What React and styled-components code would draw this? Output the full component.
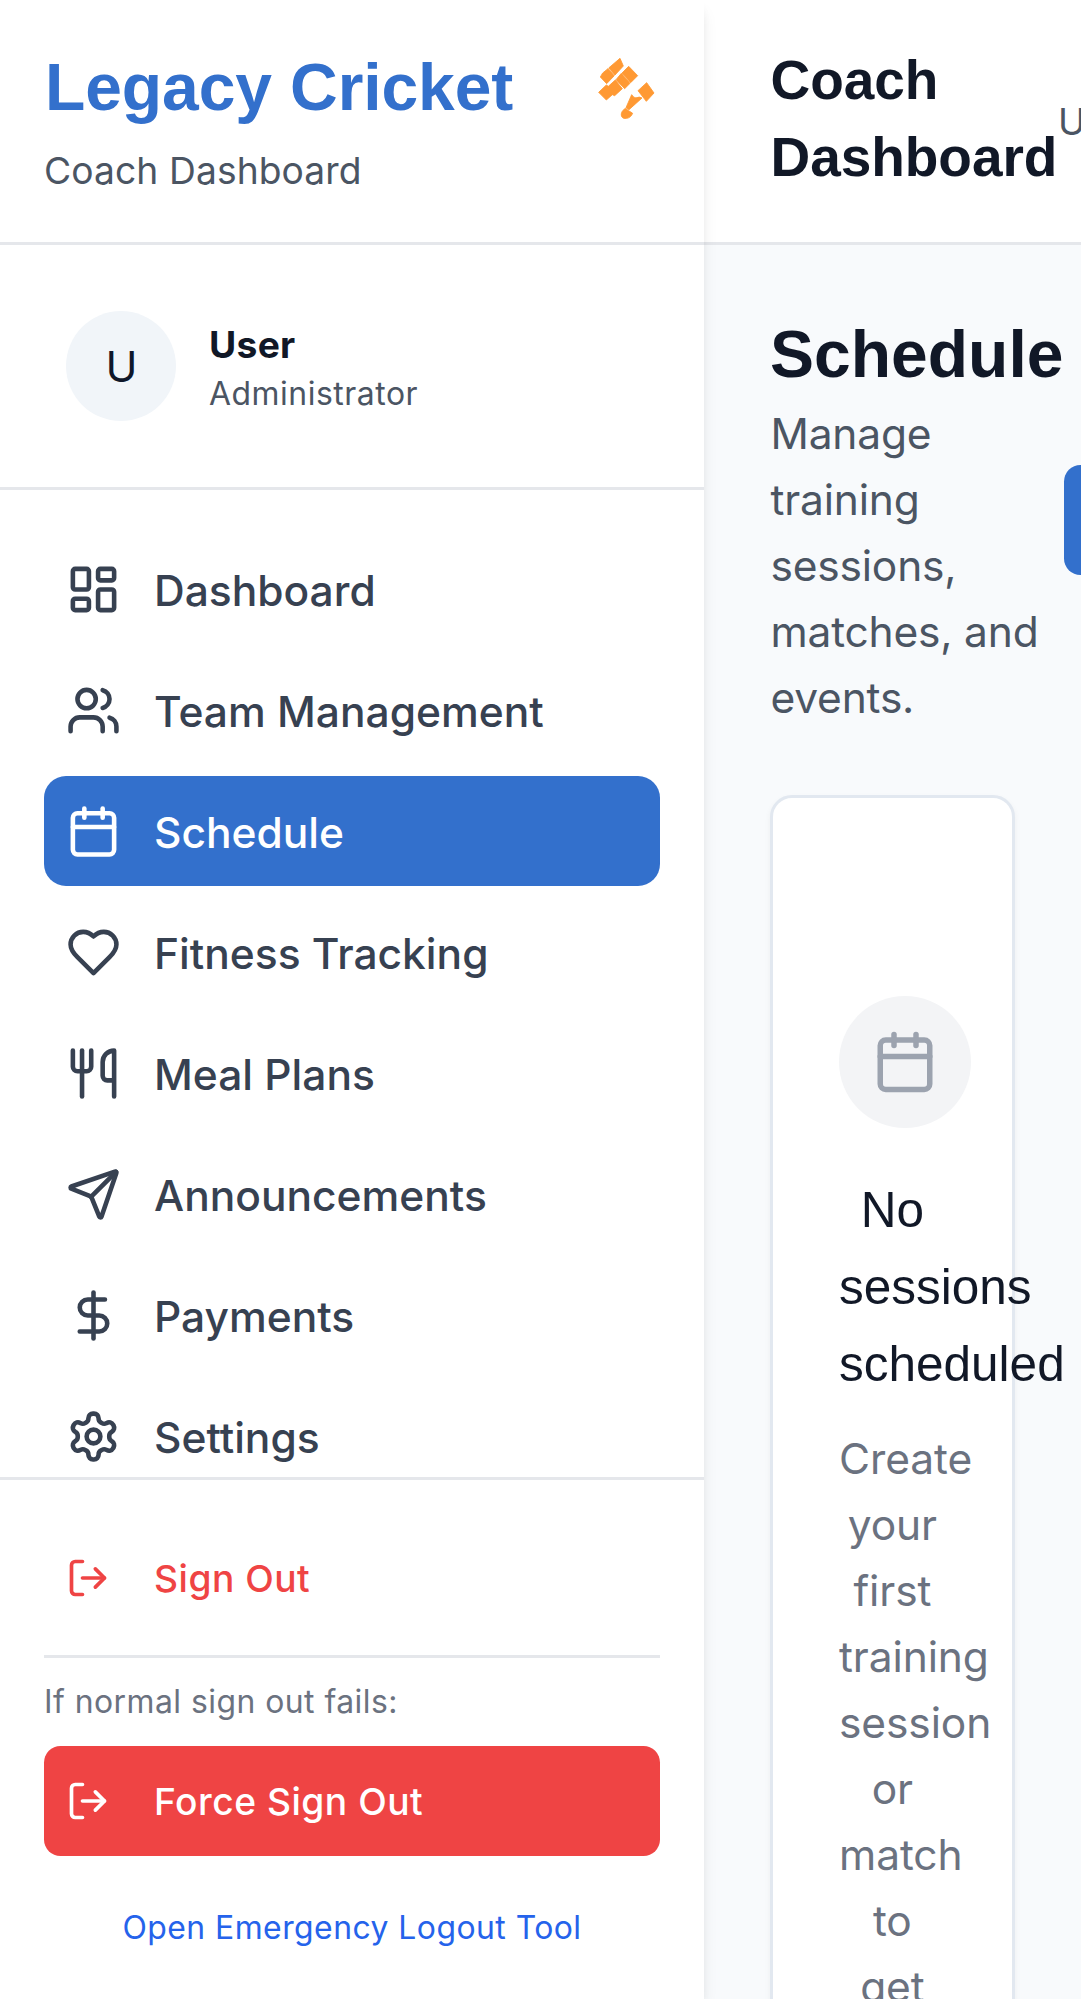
import React from "react";
import styled, { createGlobalStyle, css } from "styled-components";
import {
  LayoutDashboard, Users, Calendar, Utensils, Send, DollarSign, LogOut,
} from "lucide-react";

const body = `Inter, "Liberation Sans", sans-serif`;
const heading = `"Liberation Sans", Arial, sans-serif`;

const GlobalStyle = createGlobalStyle`
  *, *::before, *::after { box-sizing: border-box; }
  html, body { margin: 0; height: 1999px; overflow: hidden; background: #f9fafb; }
  h1, h2, h3, p { margin: 0; }
  body { font-family: ${body}; -webkit-font-smoothing: antialiased; }
  button, a { font: inherit; letter-spacing: inherit; }
`;

const Shell = styled.div`
  display: flex;
  width: 1081px;
  height: 1999px;
  overflow: hidden;
  background: #f8fafc;
`;

const Sidebar = styled.aside`
  display: flex;
  flex-direction: column;
  flex: none;
  z-index: 1;
  width: 704px;
  height: 1999px;
  background: #fff;
  box-shadow: 0 11px 16px -3px rgba(0, 0, 0, 0.1), 0 5px 11px -5px rgba(0, 0, 0, 0.1);
`;

const BrandBar = styled.div`
  display: flex;
  justify-content: space-between;
  flex: none;
  height: 245px;
  padding: 44px;
  border-bottom: 3px solid #e5e7eb;
`;

const BrandTitle = styled.h1`
  height: 99px;
  padding-left: 1px;
  font: 700 66px/87px ${heading};
  letter-spacing: -0.1px;
  color: #3370cc;
  white-space: nowrap;
`;

const BrandSubtitle = styled.p`
  font-size: 37.2px;
  line-height: 55px;
  letter-spacing: 0.1px;
  color: #4b5563;
`;

const Logo = styled.svg`
  width: 64px;
  height: 68px;
  margin: 10px 2px 0 0;
  fill: #ff9933;
  stroke: #ff9933;
  stroke-width: 2.6;
`;

const Profile = styled.div`
  display: flex;
  align-items: center;
  gap: 33px;
  flex: none;
  height: 245px;
  padding: 0 66px;
  border-bottom: 3px solid #e5e7eb;
`;

const Avatar = styled.div`
  display: grid;
  place-items: center;
  width: 110px;
  height: 110px;
  padding-left: 1px;
  border-radius: 50%;
  background: #f1f5f9;
  color: #0f172a;
  font-size: 43px;
`;

const ProfileName = styled.p`
  padding-bottom: 2px;
  font-size: 37.2px;
  line-height: 53px;
  font-weight: 650;
  letter-spacing: 0.3px;
  color: #111827;
`;

const ProfileRole = styled.p`
  font-size: 31.9px;
  line-height: 42px;
  letter-spacing: 0.53px;
  color: #4b5563;
`;

const Nav = styled.nav`
  display: flex;
  flex-direction: column;
  gap: 11px;
  flex: 1;
  min-height: 0;
  overflow: hidden;
  padding: 44px 44px 0;
`;

const NavItem = styled.a`
  display: flex;
  align-items: center;
  gap: 33px;
  flex: none;
  height: 110px;
  padding: 0 22px;
  border-radius: 22px;
  font-size: 42.5px;
  font-weight: 500;
  color: #374151;
  svg { flex: none; }
  ${(p) => p.$active && css`
    background: #3370cc;
    color: #fff;
  `}
`;

const NavLabel = styled.span`
  padding-top: 2px;
`;

const SidebarFooter = styled.div`
  display: flex;
  flex-direction: column;
  flex: none;
  height: 522px;
  padding: 43px 44px 0;
  border-top: 3px solid #e5e7eb;
`;

const SignOutButton = styled.button`
  display: flex;
  align-items: center;
  gap: 44px;
  flex: none;
  height: 110px;
  padding: 0 22px;
  border: 0;
  border-radius: 16.5px;
  font-size: 37.2px;
  font-weight: 500;
  letter-spacing: 0.5px;
  background: ${(p) => (p.$solid ? "#ef4444" : "transparent")};
  color: ${(p) => (p.$solid ? "#fff" : "#ef4444")};
`;

const Fallback = styled.div`
  display: flex;
  flex-direction: column;
  margin-top: 22px;
  padding-top: 22px;
  border-top: 3px solid #e5e7eb;
`;

const FallbackHint = styled.p`
  margin-bottom: 22px;
  font-size: 31.9px;
  line-height: 44px;
  letter-spacing: 0.46px;
  color: #6b7280;
`;

const EmergencyLink = styled.a`
  margin-top: 22px;
  text-align: center;
  font-size: 31.9px;
  line-height: 99px;
  letter-spacing: 0.46px;
  color: #2563eb;
`;

const Main = styled.div`
  display: flex;
  flex-direction: column;
  flex: 1;
  min-width: 0;
`;

const TopBar = styled.header`
  display: flex;
  align-items: center;
  flex: none;
  height: 245px;
  padding: 44px 66px;
  background: #fff;
  border-bottom: 3px solid #e5e7eb;
`;

const TopTitle = styled.h1`
  flex: none;
  width: 288px;
  padding: 0 0 4px 0.5px;
  font: 700 55px/77px ${heading};
  letter-spacing: -0.05px;
  color: #111827;
`;

const TopUser = styled.span`
  font-size: 37.2px;
  color: #4b5563;
`;

const Content = styled.main`
  flex: 1;
  padding: 66px;
`;

const PageHead = styled.div`
  display: flex;
  align-items: center;
`;

const PageIntro = styled.div`
  flex: none;
  width: 294.25px;
`;

const PageTitle = styled.h2`
  height: 90px;
  font: 700 66px/86px ${heading};
  color: #111827;
`;

const PageText = styled.p`
  padding-left: 0.5px;
  font-size: 42.5px;
  line-height: 66px;
  letter-spacing: -0.2px;
  color: #4b5563;
`;

const NewButton = styled.button`
  flex: none;
  width: 420px;
  height: 110px;
  margin-bottom: 2px;
  border: 0;
  border-radius: 16.5px;
  background: #3370cc;
`;

const Card = styled.section`
  width: 244.75px;
  height: 1600px;
  margin-top: 64px;
  padding: 198px 66px 0;
  background: #fff;
  border: 3px solid #e2e8f0;
  border-radius: 22px;
  box-shadow: 0 3px 6px rgba(0, 0, 0, 0.05);
  text-align: center;
`;

const IconDisc = styled.div`
  display: grid;
  place-items: center;
  width: 132px;
  height: 132px;
  border-radius: 50%;
  background: #f3f4f6;
  color: #9ca3af;
`;

const EmptyTitle = styled.h3`
  margin-top: 43px;
  font: 400 49.5px/77px ${heading};
  color: #111827;
`;

const EmptyText = styled.p`
  margin-top: 23.5px;
  font-size: 42.5px;
  line-height: 66px;
  letter-spacing: -0.1px;
  color: #6b7280;
`;

const StrokeIcon = ({ size, children }) => (
  <svg width={size} height={size} viewBox="0 0 24 24" fill="none" stroke="currentColor"
    strokeWidth="2" strokeLinecap="round" strokeLinejoin="round">
    {children}
  </svg>
);

const Heart = ({ size }) => (
  <StrokeIcon size={size}>
    <path d="M19 14c1.49-1.46 3-3.21 3-5.5A5.5 5.5 0 0 0 16.5 3c-1.76 0-3 .5-4.5 2-1.5-1.5-2.74-2-4.5-2A5.5 5.5 0 0 0 2 8.5c0 2.3 1.5 4.05 3 5.5l7 7Z" />
  </StrokeIcon>
);

const Gear = ({ size }) => (
  <StrokeIcon size={size}>
    <path d="M12.22 2h-.44a2 2 0 0 0-2 2v.18a2 2 0 0 1-1 1.73l-.43.25a2 2 0 0 1-2 0l-.15-.08a2 2 0 0 0-2.73.73l-.22.38a2 2 0 0 0 .73 2.73l.15.1a2 2 0 0 1 1 1.72v.51a2 2 0 0 1-1 1.74l-.15.09a2 2 0 0 0-.73 2.73l.22.38a2 2 0 0 0 2.73.73l.15-.08a2 2 0 0 1 2 0l.43.25a2 2 0 0 1 1 1.73V20a2 2 0 0 0 2 2h.44a2 2 0 0 0 2-2v-.18a2 2 0 0 1 1-1.73l.43-.25a2 2 0 0 1 2 0l.15.08a2 2 0 0 0 2.73-.73l.22-.39a2 2 0 0 0-.73-2.73l-.15-.08a2 2 0 0 1-1-1.74v-.5a2 2 0 0 1 1-1.74l.15-.09a2 2 0 0 0 .73-2.73l-.22-.38a2 2 0 0 0-2.73-.73l-.15.08a2 2 0 0 1-2 0l-.43-.25a2 2 0 0 1-1-1.73V4a2 2 0 0 0-2-2z" />
    <circle cx="12" cy="12" r="3" />
  </StrokeIcon>
);

const navItems = [
  ["Dashboard", LayoutDashboard],
  ["Team Management", Users],
  ["Schedule", Calendar],
  ["Fitness Tracking", Heart],
  ["Meal Plans", Utensils],
  ["Announcements", Send],
  ["Payments", DollarSign],
  ["Settings", Gear],
];

export default function App() {
  return (
    <>
      <GlobalStyle />
      <Shell>
        <Sidebar>
          <BrandBar>
            <div>
              <BrandTitle>Legacy Cricket</BrandTitle>
              <BrandSubtitle>Coach Dashboard</BrandSubtitle>
            </div>
            <Logo viewBox="42 42 192 204">
              <path d="M120 55L130 78L105 105L86 84Z" />
              <path d="M84 86L103 107L80 131L61 111L68 99Z" />
              <path d="M146 79L173 107L152 128L126 99Z" />
              <path d="M124 100L150 130L134 146L108 119Z" />
              <path d="M106 120L127 146L104 167L97 164L79 180L56 157L79 135L85 139Z" />
              <path d="M200 128L222 159L199 184L174 152Z" />
              <path d="M155 164L160 170Q165 175 171 173Q177 169 186 174L147 209L138 203Z" />
              <path d="M136 205L146 212L158 220C153 232 143 237 131 235C122 231 122 220 128 212Z" />
            </Logo>
          </BrandBar>
          <Profile>
            <Avatar>U</Avatar>
            <div>
              <ProfileName>User</ProfileName>
              <ProfileRole>Administrator</ProfileRole>
            </div>
          </Profile>
          <Nav>
            {navItems.map(([label, Icon]) => (
              <NavItem key={label} $active={label === "Schedule"}>
                <Icon size={55} />
                <NavLabel>{label}</NavLabel>
              </NavItem>
            ))}
          </Nav>
          <SidebarFooter>
            <SignOutButton><LogOut size={44} />Sign Out</SignOutButton>
            <Fallback>
              <FallbackHint>If normal sign out fails:</FallbackHint>
              <SignOutButton $solid><LogOut size={44} />Force Sign Out</SignOutButton>
              <EmergencyLink>Open Emergency Logout Tool</EmergencyLink>
            </Fallback>
          </SidebarFooter>
        </Sidebar>
        <Main>
          <TopBar>
            <TopTitle>Coach Dashboard</TopTitle>
            <TopUser>User</TopUser>
          </TopBar>
          <Content>
            <PageHead>
              <PageIntro>
                <PageTitle>Schedule</PageTitle>
                <PageText>Manage training sessions, matches, and events.</PageText>
              </PageIntro>
              <NewButton />
            </PageHead>
            <Card>
              <IconDisc><Calendar size={66} /></IconDisc>
              <EmptyTitle>No sessions scheduled</EmptyTitle>
              <EmptyText>Create your first training session or match to get started.</EmptyText>
            </Card>
          </Content>
        </Main>
      </Shell>
    </>
  );
}
